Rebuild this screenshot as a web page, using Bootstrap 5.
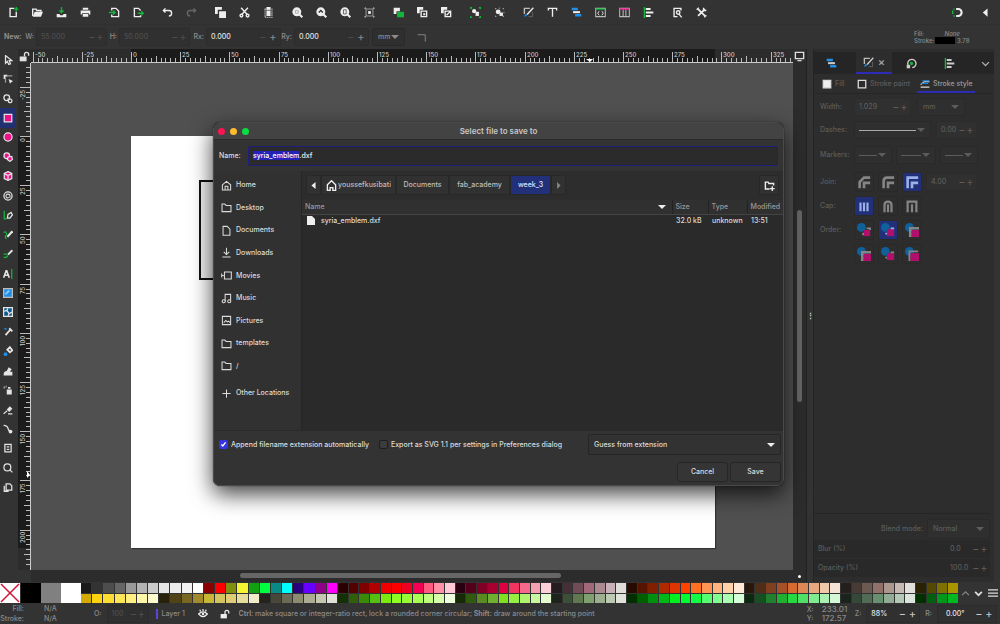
<!DOCTYPE html>
<html lang="en" data-bs-theme="dark">
<head>
<meta charset="utf-8">
<meta name="viewport" content="width=device-width, initial-scale=1">
<title>Select file to save to</title>
<link href="https://cdn.jsdelivr.net/npm/bootstrap@5.3.0/dist/css/bootstrap.min.css" rel="stylesheet">
<style>
:root{--bar:#333;--panel:#2d2d2d;--line:#262626;--blue:#2d2bb8}
body{font:500 7px/10px Inter,"Liberation Sans",sans-serif;color:#ddd;background:var(--bar);height:100vh;overflow:hidden}
button,input,select{font:inherit;color:inherit;background:none;border:0;padding:0;margin:0}
svg{display:block;fill:none;stroke:currentColor;stroke-width:2;flex:none}
.ic svg{width:11px;height:11px}
.cmd{height:25px;padding:0 1px;color:#eee;border-bottom:1px solid #303030}
.cmd .ic{width:24px;height:24px}
.cmd .set{margin-right:5px}
.ic{display:flex;align-items:center;justify-content:center;flex:none}
.opts{height:24px;color:#8c8c8c}
.opts label{text-align:right;padding-right:2px}
.num{display:flex;align-items:center;height:18px;padding:0 2px 0 4px;background:#303030;border:1px solid #2c2c2c;border-radius:2px}
.num input{flex:1 1 0;width:0;min-width:0}
.num button{width:8px;font-size:11px;font-weight:400;line-height:10px}
.num.off{color:#4e4e4e}
.num.lit input{color:#e6e6e6}
.num.lit button{width:10px}
.tools{width:16px;height:447px;margin-top:1px;color:#e4e4e4}
.tools .ic{width:15px}
.tools .ic svg{width:10px;height:10px}
.tools .on{background:#23306f}
.work{background:#505050;min-width:0;overflow:hidden}
.hrule{height:14px;background:#2c2c2c;color:#e0e0e0}
.vrule{width:13px;background:#2c2c2c}
.scale{width:100%;height:100%;stroke:none}
.sheet{left:100px;top:73px;width:584px;height:412px;background:#fff;box-shadow:1px 1px 1px #333}
.emblem{left:68px;top:44px;width:200px;height:100px;border:2px solid #111;background:#f2f2f2}
.vbar{width:13px;background:#2c2c2c;color:#ddd}
.thumb{background:#666;border-radius:3px}
.vbar .thumb{width:5px;height:192px;margin-top:147px}
.hbar{height:12px;background:#2c2c2c;padding:3px 0 0 209px}
.hbar .thumb{height:5px;width:58%}
.split{width:7px;background:#333;border-left:1px solid #222;color:#ddd}
.side{width:181px;margin-right:6px;background:var(--panel);color:#5c5c5c;border-left:1px solid #242424}
.side .tabs{height:22px;margin-top:3px;background:#252525;color:#ccc}
.side .tabs button{width:38px}
.side .tabs .on{background:#2d2d2d;border-bottom:2px solid var(--blue);width:36px}
.sub{height:20px;padding-left:8px;border-bottom:1px solid #262626}
.sub button{display:flex;align-items:center;gap:3px;height:17px;border-bottom:2px solid transparent;color:#5c5c5c}
.sub button.on{border-color:var(--blue);color:#999}
.sub svg{width:10px;height:10px;color:#ddd}
.prop{display:flex;align-items:center;padding-left:6px}
.prop>label,.prop>span{width:34px;flex:none}
.sel{position:relative;display:flex;align-items:center;height:18px;border:1px solid #292929;border-radius:2px;background:#2f2f2f}
.sel select{appearance:none;width:100%;height:100%;padding:0 5px}
.sel::after{content:"";position:absolute;right:5px;top:50%;margin-top:-2px;border:4px solid transparent;border-top-color:currentColor;border-bottom:0;pointer-events:none}
.sel hr{position:absolute;left:4px;right:14px;margin:0;border-color:currentColor;opacity:1}
.pick{width:20px;height:20px;margin-right:4px;border:1px solid #292929;border-radius:2px;color:#858585}
.pick svg{width:14px;height:14px}
.pick.on{background:#22307a;color:#9ab0e6}
.pal{height:21px;padding-top:1px;background:#333}
.pal .big{width:20px;height:20px;flex:none}
.pal .grp{display:flex;min-width:0}
.pal .duo{flex:1 1 0;min-width:0;display:flex;flex-direction:column;gap:1px;border-right:1px solid #333}
.pal .duo b{flex:1}
.stat{height:21px;color:#8a8a8a;overflow:hidden}
.stat svg{width:10px;height:10px;color:#eee}
.dlg{left:213px;top:122px;width:571px;color:#dcdcdc;background:#333;border:1px solid #4a4a4a;border-radius:7px;box-shadow:0 8px 22px rgba(0,0,0,.75),0 0 1px #000;overflow:hidden}
.ttl{height:17px;background:#434343;border-bottom:1px solid #2a2a2a;font-size:8px;font-weight:600;color:#c8c8c8}
.dot{width:7px;height:7px;border-radius:50%}
.nm{height:31px;padding:0 5px}
.nm label{width:29px}
.nm input{height:20px;flex:1;padding:0 4px;background:#2b2b2b;border:1px solid #1d1f7c;border-radius:2px;outline:0;color:#eee;caret-color:transparent}
::selection{background:#2422b8;color:#fff}
.places{width:88px;border-right:1px solid #262626;background:#313131}
.places ul{height:203px;margin:3px 0 5px}
.places a{display:flex;align-items:center;gap:4px;padding-left:7px;color:#dcdcdc;text-decoration:none}
.places svg{width:11px;height:11px;stroke-width:1.5}
.files{background:#2a2a2a;min-width:0}
.path{height:29px;padding:4px 4px 5px;background:#2d2d2d}
.path button{height:20px;border:1px solid #282828;background:#313131;color:#bdbdbd}
.path svg{width:11px;height:11px;color:#eee}
.path button.on{background:#22307a;color:#dfe4ff}
.list{width:100%;table-layout:fixed}
.list th{height:14px;padding:0 3px;font-weight:500;color:#999;background:#303030;border-bottom:1px solid #444;border-right:1px solid #222;white-space:nowrap}
.list td{height:13px;padding:0 4px;white-space:nowrap}
.tri{display:inline-block;border:4px solid transparent;border-top-color:#eee;border-bottom:0}
.foot{height:28px;padding:0 2px 0 5px;border-top:1px solid #292929}
.foot input{appearance:none;width:9px;height:9px;border:1px solid #1e1e1e;border-radius:2px;background:#3c3c3c;margin-right:3px;flex:none}
.foot input:checked{background:#3434e0 url("data:image/svg+xml,%3Csvg xmlns='http://www.w3.org/2000/svg' viewBox='0 0 10 10'%3E%3Cpath d='M2 5l2 2 4-5' fill='none' stroke='white' stroke-width='2'/%3E%3C/svg%3E");border-color:#3434e0}
.foot .sel{width:193px;height:21px;border-color:#262626;background:#323232}
.foot .sel::after{border-top-color:#eee}
.act{height:27px;padding:4px 2px 3px}
.act button{width:51px;height:20px;border:1px solid #262626;border-radius:3px;background:#353535}
</style>
</head>
<body class="d-flex flex-column">
<header class="cmd d-flex align-items-center" id="cmd"></header>
<div class="opts d-flex align-items-center ps-1">
  <span class="fw-bold" style="width:20px">New:</span>
  <label for="w" style="width:12px">W:</label><div class="num off" style="width:71px"><input id="w" value="55.000"><button>−</button><button>+</button></div>
  <label for="h" style="width:12px">H:</label><div class="num off" style="width:71px"><input id="h" value="50.000"><button>−</button><button>+</button></div>
  <label for="rx" style="width:16px">Rx:</label><div class="num lit" style="width:75px"><input id="rx" value="0.000"><button style="color:#4a4a4a">−</button><button>+</button></div>
  <label for="ry" style="width:13px">Ry:</label><div class="num lit" style="width:75px"><input id="ry" value="0.000"><button style="color:#4a4a4a">−</button><button>+</button></div>
  <div class="sel" style="width:33px;margin-left:3px"><select aria-label="Unit"><option>mm</option></select></div>
  <button class="ic" style="margin-left:12px" aria-label="Square corners" data-ic="corner"></button>
  <div class="ms-auto d-flex" style="width:86px;font-size:6px;line-height:7px"><div style="width:21px">Fill:<br>Stroke:</div><div class="text-center"><i>None</i><div class="d-flex"><span style="width:20px;height:7px;background:#000;margin-right:2px"></span>3.78</div></div></div>
</div>

<main class="flex-fill d-flex" style="min-height:0">
  <nav class="tools d-flex flex-column flex-shrink-0" id="tools" aria-label="Tools"></nav>
  <div class="d-flex flex-column flex-fill" style="min-width:0;margin-left:2px">
    <div class="d-flex hrule"><span class="ic" style="width:13px" data-ic="lock"></span><svg id="hr" class="scale flex-fill" style="min-width:0;width:0"></svg></div>
    <div class="d-flex flex-fill" style="min-height:0">
      <div class="vrule"><svg id="vr" class="scale"></svg></div>
      <div class="work flex-fill position-relative"><div class="sheet position-absolute"><div class="emblem position-absolute"></div></div></div>
    </div>
    <div class="hbar" style="margin-left:13px"><div class="thumb"></div></div>
  </div>
  <div class="vbar d-flex flex-column align-items-center"><span class="ic" style="height:14px" data-ic="screen"></span><div class="thumb"></div><span class="mt-auto" style="width:3px;height:3px;border-radius:50%;background:#fff;margin-bottom:4px"></span></div>
  <div class="split d-flex align-items-center justify-content-center fw-bold">⋮</div>
  <aside class="side d-flex flex-column flex-shrink-0">
    <div class="tabs d-flex flex-shrink-0">
      <button class="ic" style="width:34px" aria-label="Layers" data-ic="layers"></button><button class="ic on ms-2" aria-label="Fill and Stroke" data-ic="fill" id="ftab"></button><button class="ic" aria-label="Symbols" data-ic="swirl"></button><button class="ic" aria-label="Align" data-ic="align"></button><button class="ic ms-auto" style="width:18px" aria-label="More" data-ic="down"></button>
    </div>
    <div class="sub d-flex flex-shrink-0 align-items-end">
      <button style="width:35px"><svg viewBox="0 0 16 16"><path d="M2 2h12v12H2z" fill="#eee"/></svg>Fill</button>
      <button style="width:60px"><svg viewBox="0 0 16 16"><path d="M2 2h12v12H2z"/></svg>Stroke paint</button>
      <button class="on" style="width:58px;padding-left:3px"><svg viewBox="0 0 16 16"><path d="M1 9l6-5h8M1 13h14" /><path d="M4 3h11M2 7h11" stroke="#2288dd"/></svg>Stroke style</button>
    </div>
    <div class="prop" style="height:26px"><label for="sw">Width:</label><div class="num" style="width:57px"><input id="sw" value="1.029"><button>−</button><button>+</button></div><div class="sel" style="width:48px;margin-left:6px"><select aria-label="Width unit"><option>mm</option></select></div></div>
    <div class="prop" style="height:20px"><label for="ds">Dashes:</label><div class="sel" style="width:77px"><select id="ds"></select><hr style="color:#aaa"></div><div class="num" style="width:41px;margin-left:5px"><input aria-label="Dash offset" value="0.00"><button>−</button><button>+</button></div></div>
    <div class="prop" style="height:30px"><label for="mk">Markers:</label><div class="sel" style="width:38px"><select id="mk"></select><hr></div><div class="sel ms-1" style="width:40px"><select aria-label="Mid marker"></select><hr></div><div class="sel ms-1" style="width:38px"><select aria-label="End marker"></select><hr></div></div>
    <div class="prop" style="height:24px"><span>Join:</span><button class="pick ic" aria-label="Bevel" data-ic="j1"></button><button class="pick ic" aria-label="Round" data-ic="j2"></button><button class="pick ic on" aria-label="Miter" data-ic="j3"></button><div class="num" style="width:51px"><input aria-label="Miter limit" value="4.00"><button>−</button><button>+</button></div></div>
    <div class="prop" style="height:24px"><span>Cap:</span><button class="pick ic on" aria-label="Butt" data-ic="c1"></button><button class="pick ic" aria-label="Round cap" data-ic="c2"></button><button class="pick ic" aria-label="Square cap" data-ic="c3"></button></div>
    <div class="prop" style="height:24px"><span>Order:</span><button class="pick ic" aria-label="Order 1" data-ic="o1"></button><button class="pick ic on" aria-label="Order 2" data-ic="o2"></button><button class="pick ic" aria-label="Order 3" data-ic="o3"></button></div>
    <div class="prop" style="height:24px"><span></span><button class="pick ic" aria-label="Order 4" data-ic="o3"></button><button class="pick ic" aria-label="Order 5" data-ic="o2"></button><button class="pick ic" aria-label="Order 6" data-ic="o4"></button></div>
    <div class="mt-auto pt-1" style="border-top:1px solid #252525;margin-right:4px">
      <div class="d-flex align-items-center justify-content-end" style="height:22px"><label for="bm" class="me-1">Blend mode:</label><div class="sel" style="width:63px;height:20px"><select id="bm"><option>Normal</option></select></div></div>
      <div class="num border-0" style="background:#292929"><label for="bl" class="flex-fill">Blur (%)</label><input id="bl" value="0.0" style="flex:0 0 22px"><button>−</button><button>+</button></div>
      <div class="num border-0" style="background:#292929;margin:1px 0 5px"><label for="op" class="flex-fill">Opacity (%)</label><input id="op" value="100.0" style="flex:0 0 22px"><button>−</button><button>+</button></div>
    </div>
  </aside>
</main>

<div class="pal d-flex flex-shrink-0" id="pal">
  <svg class="big" viewBox="0 0 20 20"><path d="M0 0h20v20H0z" fill="#fff" stroke="none"/><path d="M1 1l18 18M19 1L1 19" stroke="#d0143c" stroke-width="1.5"/></svg>
  <b class="big" style="background:#000;margin-left:1px"></b><b class="big" style="background:#808080"></b><b class="big" style="background:#fff"></b>
</div>
<footer class="stat d-flex align-items-center flex-shrink-0">
  <div class="text-end" style="width:24px">Fill:<br>Stroke:</div><div style="margin-left:20px;width:50px">N/A<br>N/A</div>
  <label for="oo">O:</label><div class="num off" style="width:42px;margin-left:5px"><input id="oo" value="100"><button>−</button><button>+</button></div>
  <span style="width:2px;height:10px;background:#5a46d8;margin:0 4px 0 7px"></span><span style="width:36px">Layer 1</span>
  <span class="ic" data-ic="eye"></span><span class="ic" style="margin:0 9px 0 12px" data-ic="lock"></span>
  <span class="flex-fill text-nowrap overflow-hidden"><b>Ctrl</b>: make square or integer-ratio rect, lock a rounded corner circular; <b>Shift</b>: draw around the starting point</span>
  <div style="width:15px;line-height:9px">X:<br>Y:</div><div style="width:33px;font-size:8px;line-height:9px">233.01<br>172.57</div>
  <label for="zz">Z:</label><div class="num lit" style="width:54px;margin:0 5px"><input id="zz" value="88%"><button style="color:#ccc">−</button><button style="color:#ccc">+</button></div>
  <label for="rr">R:</label><div class="num lit" style="width:60px;margin:0 3px 0 5px;padding-left:8px"><input id="rr" value="0.00°"><button style="color:#ccc">−</button><button style="color:#ccc">+</button></div>
</footer>

<section class="dlg position-absolute" role="dialog" aria-labelledby="dt">
  <div class="ttl d-flex align-items-center"><div class="d-flex" style="gap:5px;padding-left:4px;width:70px"><span class="dot" style="background:#ff1453"></span><span class="dot" style="background:#fdbb2d"></span><span class="dot" style="background:#0bdc41"></span></div><span id="dt" class="flex-fill text-center" style="margin-right:70px">Select file to save to</span></div>
  <div class="nm d-flex align-items-center"><label for="fn">Name:</label><input id="fn" value="syria_emblem.dxf" autofocus></div>
  <div class="d-flex">
    <nav class="places flex-shrink-0"><ul class="list-unstyled d-flex flex-column" id="places"></ul><a href="#other" style="height:22px;margin-bottom:26px"><span data-ic="plus"></span>Other Locations</a></nav>
    <div class="files flex-fill">
      <div class="path d-flex">
        <button class="ic" style="width:15px" aria-label="Back"><svg viewBox="0 0 16 16"><path d="M11 3v10L5 8z" fill="#eee" stroke="none"/></svg></button>
        <button class="ic" style="width:75px;gap:1px"><span data-ic="home2"></span>youssefkusibati</button>
        <button style="width:53px">Documents</button><button style="width:61px">fab_academy</button><button class="on" style="width:41px">week_3</button>
        <button class="ic" style="width:15px" aria-label="Forward"><svg viewBox="0 0 16 16"><path d="M6 3v10l5-5z" fill="#888" stroke="none"/></svg></button>
        <button class="ic ms-auto" style="width:20px" aria-label="New folder" data-ic="newf"></button>
      </div>
      <table class="list">
        <colgroup><col><col style="width:36px"><col style="width:39px"><col style="width:36px"></colgroup>
        <thead><tr><th><div class="d-flex align-items-center justify-content-between" style="padding-right:3px">Name<span class="tri"></span></div></th><th>Size</th><th>Type</th><th class="border-end-0">Modified</th></tr></thead>
        <tbody><tr><td><div class="d-flex align-items-center" style="gap:6px;padding-left:1px"><svg width="8" height="9" viewBox="0 0 8 9"><path d="M0 0h5l3 3v6H0z" fill="#eee" stroke="none"/></svg>syria_emblem.dxf</div></td><td>32.0 kB</td><td>unknown</td><td>13:51</td></tr></tbody>
      </table>
    </div>
  </div>
  <div class="foot d-flex align-items-center"><input type="checkbox" id="ap" checked><label for="ap" style="width:148px">Append filename extension automatically</label><input type="checkbox" id="ex"><label for="ex">Export as SVG 1.1 per settings in Preferences dialog</label><div class="sel ms-auto"><select aria-label="File type"><option>Guess from extension</option></select></div></div>
  <div class="act d-flex justify-content-end" style="gap:2px"><button>Cancel</button><button>Save</button></div>
</section>

<script src="https://cdn.jsdelivr.net/npm/bootstrap@5.3.0/dist/js/bootstrap.bundle.min.js"></script>
<script>
const G='stroke="#12b53a"',B='stroke="#1f8fe8"',F='fill="currentColor" stroke="none"',P='fill="#f0108a"';
const mag='<circle cx="7" cy="7" r="6.500" '+F+'/><path d="M11 11l4 4" stroke-width="3"/>';
const ord=s=>'<circle cx="5" cy="5" r="5" fill="#10609a" stroke="none"/>'+s;
const IC={
new:'<path d="M9 2H3v12h9V7"/><path d="M12 0v6M9 3h6" '+G+'/>',
open:'<path d="M1 13V3h5l1 2h6v2"/><path d="M1 14l3-7h12l-3 7z" '+F+'/>',
save:'<path d="M1 10h4l1 2h4l1-2h4v5H1z" '+F+'/><path d="M8 0v8M5 5l3 3 3-3" '+G+'/>',
print:'<path d="M4 1h8v3H4zM1 5h14v6h-2V9H3v2H1zM4 10h8v4H4z" '+F+'/>',
imp:'<path d="M4 5V2h6l4 4v8H4v-3"/><path d="M0 8h8M6 5l3 3-3 3" '+G+'/>',
exp:'<path d="M11 5L8 2H2v12h9v-2"/><path d="M7 9h8M12 6l3 3-3 3" '+G+'/>',
undo:'<path d="M5 2L2 5l3 3M2 5h8q4 0 4 4t-4 4"/>',
redo:'<path d="M11 2l3 3-3 3M14 5H6Q2 5 2 9t4 4" stroke="#666"/>',
copy:'<path d="M0 0h10v4H4v6H0zM6 6h10v10H6z" '+F+'/>',
cut:'<path d="M3 1l9 10M13 1L4 11"/><circle cx="3.500" cy="12.500" r="2"/><circle cx="12.500" cy="12.500" r="2"/>',
paste:'<path d="M3 3h10v12H3z" stroke-dasharray="2 1" stroke="#aaa"/><path d="M5 5h6v8H5zM5 0h6v4H5z" '+F+'/>',
z1:mag+'<path d="M5 5h4v4H5z" stroke="#999" stroke-width="1"/>',z2:mag+'<path d="M4 8l3-3 3 3" stroke="#333"/>',z3:mag+'<path d="M5 4h4v6H5z" stroke="#333" stroke-width="1"/>',
frame:'<path d="M3 3h10v10H3z" stroke="#999" stroke-width="1.500"/><path d="M0 2h3M13 2h3M0 14h3M13 14h3M2 0v3M14 0v3M2 13v3M14 13v3" stroke="#aaa" stroke-width="1"/><path d="M6 6h4v4H6z" '+F+'/>',
dup:'<path d="M1 1h9v5H5v4H1z" '+F+'/><path d="M6 7h10v8H6z" fill="#12b53a" stroke="none"/>',
clone:'<path d="M0 0h9v4H4v5H0z" '+F+'/><path d="M6 6h8v8H6z"/><path d="M9 9h3v3H9z" '+F+'/>',
unl:'<path d="M0 0h9v4H4v5H0z" '+F+'/><path d="M6 6h8v8H6zM8 12l6-6"/>',
grp:'<path d="M1 3V1h2M13 1h2v2M15 13v2h-2M3 15H1v-2" '+G+'/><circle cx="6" cy="6" r="3" '+F+'/><path d="M8 7h5v6H8z" '+F+'/>',
ung:'<path d="M2 2l1 1M8 1v1M14 2l-1 1M15 8h-1M2 14l1-1M14 14l-1-1" stroke="#bbb"/><circle cx="6" cy="7" r="3.500" '+F+'/><path d="M8 8h5v5H8z" '+F+'/>',
fill:'<path d="M10 2H2v8" stroke="#bbb"/><path d="M15 1L6 11"/><path d="M2 14q0-4 3-4l1 2q-1 2-4 2z" fill="#1f8fe8" stroke="none"/><path d="M14 7v7H8" stroke="#777" stroke-width="1"/>',
text:'<path d="M2 5V2h12v3M8 2v12"/>',
layers:'<path d="M1 3h9M6 12h9" '+B+' stroke-width="3.500"/><path d="M3 7.500h10" stroke-width="3"/>',
xml:'<path d="M1 2h14v12H1z" stroke="#bbb" stroke-width="1.500"/><path d="M1 3h14" '+G+'/><path d="M6 6L4 9l2 3M10 6l2 3-2 3" stroke-width="1.300"/>',
sel:'<path d="M1 2h14v12H1zM6 3v11M10 3v11" stroke="#bbb" stroke-width="1.500"/><path d="M1 3h14" stroke="#f0108a"/>',
align:'<path d="M2 0v16" '+G+'/><path d="M4 3h7M4 8h11M4 13h7" stroke-width="3"/>',
prefs:'<path d="M13 5V2H3v12h5"/><circle cx="9" cy="8" r="2.500"/><path d="M10 10l4 5"/>',
tool:'<path d="M3 3l10 10M13 3L3 13" stroke-width="2.500"/><path d="M1 4l3-3M12 15l3-3M11 1v4h4" stroke-width="2"/>',
snap:'<path d="M6 3h3a5 5 0 010 10H6" stroke-width="3"/><path d="M2 3h2M2 13h2M1 5v5" '+G+'/>',
left:'<path d="M11 2v12L4 8z" '+F+'/>',
corner:'<path d="M1 4h11v10" stroke-width="1.300"/>',
lock:'<path d="M1 8h10v7H1z" '+F+'/><path d="M8 8V5q0-3 3-3t3 3v2"/>',
screen:'<path d="M2 2h12v9H2zM5 14h6"/>',down:'<path d="M3 6l5 5 5-5" stroke="#aaa"/>',
swirl:'<path d="M4 12a6 6 0 115 2"/><circle cx="8" cy="8" r="2.500" fill="#12b53a" stroke="none"/><path d="M1 10h5v5H1z" '+F+'/>',
eye:'<path d="M1 8q7-7 14 0-7 8-14 0zM4 4L3 1M12 4l1-3M8 3V0"/><circle cx="8" cy="8" r="2" '+F+'/>',
j1:'<path d="M3 15V8l5-5h7M8 15V9h7" stroke-width="3"/>',j2:'<path d="M3 15V7q0-4 4-4h8M8 15V9h7" stroke-width="3"/>',j3:'<path d="M3 15V3h12M8 15V9h7" stroke-width="3"/>',
c1:'<path d="M4 4v10M8 4v10M12 4v10" stroke-width="2.500"/>',c2:'<path d="M4 15V7q0-4 4-4t4 4v8M8 6v9" stroke-width="2.500"/>',c3:'<path d="M3 15V3h10v12M8 6v9" stroke-width="2.500"/>',
o1:ord('<path d="M8 8h7v7H8z" fill="#b0106c" stroke="none"/><path d="M7 14v-3M11 6h4v2"/>'),
o2:ord('<path d="M7 7h8v8H7z" fill="#b0106c" stroke="none"/><path d="M6 13v-2M11 6h4" />'),
o3:ord('<path d="M8 8h8v8H8z" fill="#b0106c" stroke="none"/><path d="M6 16V6h10" stroke-width="3"/>'),
o4:ord('<path d="M6 7h10v9H6z" fill="#b0106c" stroke="none"/><path d="M5 16V5h10"/>'),
home2:'<path d="M2 7l6-6 6 6v8h-4v-4H6v4H2z"/>',home:'<path d="M2 7l6-5 6 5v7.500H2zM6 14V9h4v5"/>',
dir:'<path d="M1.500 3h4l2 2h7v9h-13z"/>',doc:'<path d="M3 2h6l4 4v9H3z"/>',dl:'<path d="M8 1v10M4 7l4 4 4-4M2 14.500h12"/>',
mov:'<path d="M5 3h10v10H5zM1 5v6M1 8h3"/>',mus:'<path d="M6 12V2h8v9"/><circle cx="4" cy="12" r="2.300"/><circle cx="12" cy="12" r="2.300"/>',
pic:'<path d="M2 2h12v12H2zM4 11l3-3 2 2 2-1 2 2"/>',plus:'<path d="M8 2v12M2 8h12"/>',
newf:'<path d="M8 13H2V3h4l1 2h7v3M12 9v7M8.500 12.500h7"/>',
arrow:'<path d="M4 1v12l3-3 2 5 3-1-2-5h4z"/>',node:'<path d="M1 1h6v3H4v4H1z" '+F+'/><path d="M6 3h9M4 7v7" stroke="#999"/><path d="M9 8l7 3-5 4z" '+F+'/>',
shape:'<circle cx="6" cy="6" r="4.500"/><path d="M8 8h4q3 1 2 4t-5 1z"/>',
rect:'<path d="M2 2h12v12H2z" '+P+'/>',circ:'<circle cx="8" cy="8" r="6.500" '+P+'/>',star:'<circle cx="6" cy="6" r="4.500" '+P+'/><path d="M8 8l6-1 1 5-4 3-4-3z" '+P+'/>',
cube:'<path d="M8 1l6 3v8l-6 3-6-3V4z" '+P+'/><path d="M3 5l5 2 5-2M8 7v7"/>',spiral:'<circle cx="8" cy="8" r="6.500"/><path d="M11 11q1-6-3-6T5 9t4 1" stroke-width="1.700"/>',
pen:'<path d="M2 1v13h4" '+G+'/><path d="M7 13l1-6 5-3 2 4-4 5z"/>',pencil:'<path d="M15 2L7 11" stroke-width="3.500"/><path d="M1 4q4-3 5 3-5 5 0 7" '+G+'/>',
brush:'<path d="M15 2L8 9" stroke-width="3"/><path d="M1 8h6M1 13q5 2 7-3" '+G+'/>',txt:'<path d="M1 14L5 3h1l4 11M3 10h6" stroke-width="2.500"/><path d="M14 0v16" '+G+'/>',
grad:'<path d="M1 1h14v14H1z" fill="#1f8fe8" stroke="#bbb"/><path d="M4 10l6-6" stroke="#7cc8ff" stroke-width="3"/>',mesh:'<path d="M1 1h14v14H1z" fill="#0b5b8e"/><path d="M2 7q4-3 6 1t6 0M8 2q-3 4 0 6t0 6"/>',
drop:'<path d="M12 4L4 13" stroke-width="3"/><path d="M10 2l5 5" stroke-width="3"/><path d="M2 3h4" '+B+'/>',buck:'<path d="M7 6l4-4 4 5-4 3z" stroke-width="3"/><circle cx="4" cy="13" r="3" fill="#1f8fe8" stroke="none"/>',
tweak:'<path d="M1 14q0-6 5-6l3-6 5 3-3 4h4v6H1z" '+F+'/>',spray:'<path d="M6 7h8v8H6zM8 3h4v3H8z" '+F+'/><path d="M2 2v4M5 1v3" stroke="#999"/>',
erase:'<path d="M6 7l5-5 4 4-5 5z" '+F+'/><path d="M1 14l6-5M8 14h7"/>',conn:'<path d="M1 2q6 0 7 5t6 6" /><circle cx="12" cy="12" r="3" '+F+'/>',meas:'<path d="M3 2h10v12H3zM6 6h4M6 10h4"/>',
zoom:'<circle cx="7" cy="7" r="5.500"/><path d="M11 11l4 4"/>',pages:'<path d="M5 3h6l3 3v7H5zM2 6v9h7"/>'};
const svg=n=>`<svg viewBox="0 0 16 16">${IC[n]}</svg>`;
const btn=(n,c='')=>`<button class="ic ${c}" aria-label="${n}">${svg(n)}</button>`;
document.querySelectorAll('[data-ic]').forEach(e=>e.innerHTML=svg(e.dataset.ic));
ftab.innerHTML+='<span style="margin-left:4px;font-size:11px;color:#aaa">×</span>';
cmd.innerHTML='new open save print|imp exp|undo redo|copy cut paste|z1 z2 z3 frame|dup clone unl|grp ung|fill text layers xml sel align|prefs tool'.split('|').map(g=>`<div class="d-flex set">${g.split(' ').map(n=>btn(n)).join('')}</div>`).join('')+`<div class="d-flex ms-auto" style="margin-right:2px">${btn('snap','me-1')}${btn('left')}</div>`;
tools.innerHTML='arrow node shape rect circ star cube spiral pen pencil brush txt grad mesh drop buck tweak spray erase conn meas zoom pages'.split(' ').map(n=>btn(n,'flex-fill'+(n=='rect'?' on':''))).join('');
places.innerHTML=[['home','Home'],['dir','Desktop'],['doc','Documents'],['dl','Downloads'],['mov','Movies'],['mus','Music'],['pic','Pictures'],['dir','templates'],['dir','/']].map(([i,t])=>`<li class="flex-fill d-flex"><a href="#${t}">${svg(i)}${t}</a></li>`).join('');
// rulers: 25 units span 49.2 px, with ten divisions each
const U=49.2;
let h='<rect x="100" width="584" height="13" fill="#1b1b1b"/><rect y="13" width="100%" height="1" fill="#ccc"/>',v='<rect y="73" width="13" height="412" fill="#1b1b1b"/><rect x="12" width="1" height="100%" fill="#ccc"/>';
for(let i=-20;i<=134;i++){const m=i%10==0,l=m?10:i%5==0?6:4,p=Math.round(100+i*U/10),q=Math.round(73+i*U/10);
 h+=`<rect x="${p}" y="${13-l}" width="1" height="${l}" fill="#bbb"/>`;if(m)h+=`<text x="${p+2}" y="8" fill="#ccc" font-size="6">${i*2.5}</text>`;
 if(i<-14||i>87)continue;
 v+=`<rect x="${12-l}" y="${q}" width="${l}" height="1" fill="#bbb"/>`;if(m)v+=`<text transform="translate(7 ${q+(i==0?6:i<40&&i>0?10:13)}) rotate(-90)" fill="#ccc" font-size="6">${i*2.5}</text>`}
hr.innerHTML=h+'<path d="M555 10h7l-3 3z" fill="#fff"/>';vr.innerHTML=v+'<path d="M9 408v7l3-3z" fill="#fff"/>';
// palette: top and bottom rows, first the basic colours, then the shade ramps
const S=[[257,'1a1a1a 333333 4d4d4d 666666 999999 b3b3b3 cccccc e6e6e6 ececec f2f2f2 ffffff 8b0000 ff0000 808f10 f5f530 10a010 00ff40 0a8a85 00ffff 2a0080 6600ff 900088 ff00ff','d4aa00 ffd40e ffdd30 ffe655 fff080 fff8a8 fffbd0 28220b 504416 786721 a08a2c c8b737 d3c45f decd75 e6dd9a f0ebc8 24241c 48483a 6a6a55 8c8c70 acac93 c5c8b0 e0e2da'],
[621,'2b0000 550000 800000 b00000 f00000 ff0000 f00020 f50055 ff5a80 ff90a5 ffc8d5 280010 55001a 800025 a80030 e00040 f03560 f56a8a f8a0b0 fbd0d8 241c1e 453038 6f4c56 a06878 ac8890 c8b0b8 e0dcdc 280b00 551500 802000 b02a00 e03500 ff4200 ff7020 ff9550 ffb480 ffd0aa ffe8d5 28170b 502d16 804020 a85028 d86a30 e08855 e8a880 f0c8aa f5e3d5 241f1c 483a37 6c5a50 907068 ac9690 c8b8b4 e2dedb 282200 554800 807000 aa9500','143005 2f6008 3a8a08 55c010 7de810 8eff20 99ff35 aaff55 c0ff80 d8ffaa eeffdd 172a08 305a10 5a8a20 70b030 80e020 95ee40 b0f570 c8f8a0 e5fbd0 1e241c 3c5038 607850 80a070 9cb090 bccab4 dfe2da 003000 006000 009010 00b818 00f020 00ff30 10ff45 55ff70 80ff90 aaffb4 d5ffd8 0b2810 165020 208030 20b030 28d840 50e068 80ea90 aaf0b4 d5f8d8 1a241c 36483a 506c55 689070 90ac95 b4c8b8 dae3dc 003000 006010 009818 00b820']];
pal.innerHTML+=S.map(([w,a,b])=>{b=b.split(' ');return `<div class="grp" style="flex:${w} 1 0">${a.split(' ').map((c,i)=>`<div class="duo"><b style="background:#${c}"></b><b style="background:#${b[i]}"></b></div>`).join('')}</div>`}).join('')+'<div class="d-flex align-items-center justify-content-around" style="width:41px"><svg width="9" viewBox="0 0 16 16"><path d="M2 11l6-6 6 6" stroke="#888"/></svg><svg width="9" viewBox="0 0 16 16"><path d="M2 5l6 6 6-6" stroke-width="3"/></svg><svg width="10" viewBox="0 0 16 16"><path d="M0 3h16M0 8h16M0 13h16"/></svg></div>';
fn.focus();fn.setSelectionRange(0,12);
</script>
</body>
</html>
